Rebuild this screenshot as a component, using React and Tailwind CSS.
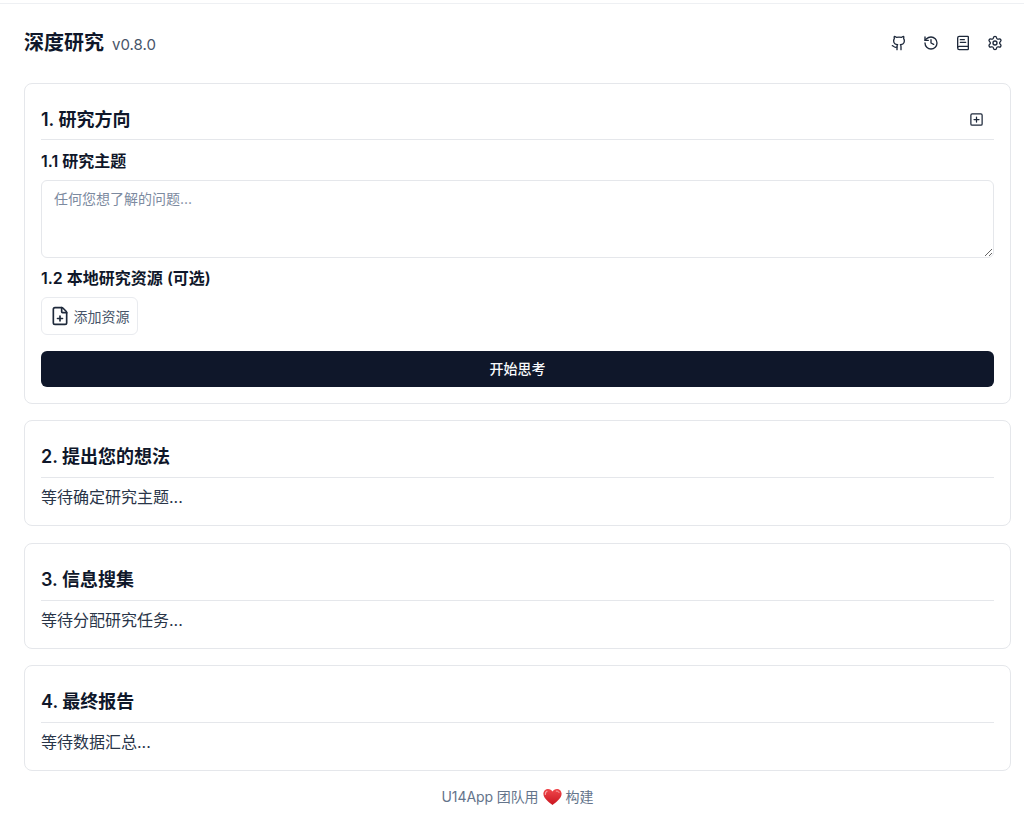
import { Github, History, BookText, Settings, SquarePlus, FilePlus } from "lucide-react";

function Heart() {
    return (
        <svg viewBox="0 0 20 18" className="ml-[5px] mr-[3px] h-[18px] w-[19px]">
            <defs>
                <linearGradient id="heartFill" x1="0" y1="0" x2="0" y2="1">
                    <stop offset="0" stopColor="#f0484c" />
                    <stop offset="1" stopColor="#c9151f" />
                </linearGradient>
            </defs>
            <path
                d="M10 17.500C7 15 .4 10.800.4 5.700.4 2.600 2.800.5 5.400.5c2 0 3.600 1 4.600 2.800C11 1.500 12.600.5 14.600.5c2.600 0 5 2.100 5 5.200 0 5.100-6.600 9.300-9.600 11.800z"
                fill="url(#heartFill)"
            />
            <path d="M4.200 3c-1.300.6-1.900 1.800-1.700 3.200" fill="none" stroke="#f9a3a3" strokeWidth="1.300" strokeLinecap="round" />
            <path d="M14 2.800c1.200-.3 2.400.3 2.900 1.400" fill="none" stroke="#f9a3a3" strokeWidth="1" strokeLinecap="round" />
        </svg>
    );
}

function Section({ title, action, children, headClass = "mb-2 h-[40px] pt-[1px]", className = "" }) {
    return (
        <section className={`rounded-lg border border-[#e5e7eb] bg-white px-4 pb-4 pt-[16px] ${className}`}>
            <div className={`flex items-center justify-between border-b border-[#e5e7eb] ${headClass}`}>
                <h3 className="text-[18px] font-semibold leading-7 text-[#0f172a]">{title}</h3>
                {action}
            </div>
            {children}
        </section>
    );
}

// the three waiting cards sit 1px lower on the rule than the first one
const waitingHead = "mb-[7px] h-[41px] pb-[1px] pt-[1px]";

function Waiting({ children }) {
    return <div className="h-[24px] text-[16px] leading-6 text-[#293548]">{children}</div>;
}

export default function App() {
    return (
        <div className="min-h-[819px] bg-white font-['Inter','Noto_Sans_CJK_SC',sans-serif] text-[#0f172a]">
            <div className="h-[4px] border-b border-[#eef0f3]" />
            <div className="pl-6 pr-[13px]">
                {/* Header */}
                <header className="flex h-[79px] items-center justify-between pb-[1px]">
                    <h1 className="mt-[2px] flex items-baseline text-[20px] font-semibold leading-7">
                        深度研究
                        <small className="ml-2 text-[15px] font-normal text-[#475569]">v0.8.0</small>
                    </h1>
                    <div className="flex items-center gap-4 pr-[8px] text-[#1e293b]">
                        <Github className="h-[16px] w-[16px]" />
                        <History className="h-[16px] w-[16px]" />
                        <BookText className="h-[16px] w-[16px]" />
                        <Settings className="h-[16px] w-[16px]" />
                    </div>
                </header>

                <div className="flex flex-col gap-4">
                    <Section
                        title="1. 研究方向"
                        action={<SquarePlus className="mb-[2px] mr-[10px] h-[15px] w-[15px] text-[#1e293b]" />}
                    >
                        <label className="block text-[16px] font-semibold leading-[26px]">1.1 研究主题</label>
                        <textarea
                            className="mt-[6px] block h-[78px] w-full rounded-md border border-[#e5e7eb] bg-white px-3 py-2 text-[14px] leading-5 outline-none placeholder:text-[#7c8aa0]"
                            placeholder="任何您想了解的问题..."
                        />
                        <label className="mt-[6px] block text-[16px] font-semibold leading-[28px]">1.2 本地研究资源 (可选)</label>
                        <button className="mt-[5px] flex h-[38px] w-[97px] items-center justify-center gap-[4px] rounded-md border border-[#e9ebef] bg-white text-[14px] text-[#475569]">
                            <FilePlus className="h-[20px] w-[20px] text-[#1e293b]" />
                            添加资源
                        </button>
                        <button className="mt-4 flex h-[36px] w-full items-center justify-center rounded-md bg-[#0f172a] pb-[1px] text-[14px] font-medium text-[#f8fafc]">
                            开始思考
                        </button>
                    </Section>

                    <Section title="2. 提出您的想法" headClass={waitingHead}><Waiting>等待确定研究主题...</Waiting></Section>
                    <Section title="3. 信息搜集" headClass={waitingHead} className="mt-[1px]"><Waiting>等待分配研究任务...</Waiting></Section>
                    <Section title="4. 最终报告" headClass={waitingHead}><Waiting>等待数据汇总...</Waiting></Section>
                </div>

                <footer className="flex h-[48px] items-center justify-center pt-[3px] text-[14px] text-[#64748b]">
                    <span className="tracking-[-0.1px]">U14App 团队用</span>
                    <Heart />
                    构建
                </footer>
            </div>
        </div>
    );
}
